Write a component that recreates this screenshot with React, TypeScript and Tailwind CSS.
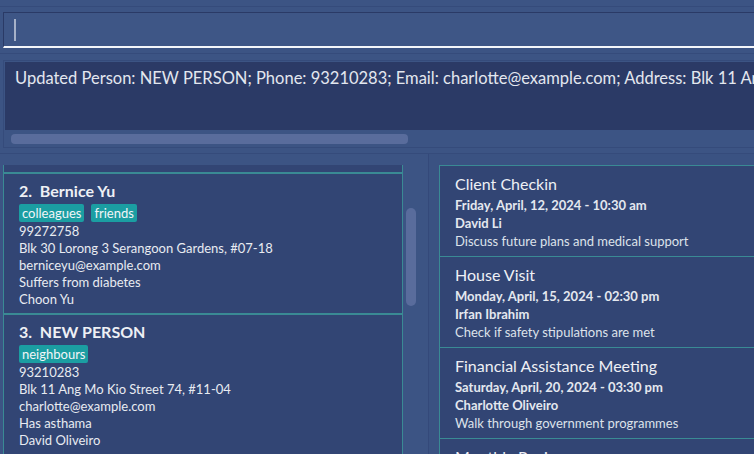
import React from "react";

type Person = {
  idx: number;
  name: string;
  tags: string[];
  phone: string;
  address: string;
  email: string;
  note: string;
  caretaker: string;
};

type Appt = {
  title: string;
  when: string;
  who: string;
  desc: string;
};

const people: Person[] = [
  {
    idx: 2,
    name: "Bernice Yu",
    tags: ["colleagues", "friends"],
    phone: "99272758",
    address: "Blk 30 Lorong 3 Serangoon Gardens, #07-18",
    email: "berniceyu@example.com",
    note: "Suffers from diabetes",
    caretaker: "Choon Yu",
  },
  {
    idx: 3,
    name: "NEW PERSON",
    tags: ["neighbours"],
    phone: "93210283",
    address: "Blk 11 Ang Mo Kio Street 74, #11-04",
    email: "charlotte@example.com",
    note: "Has asthama",
    caretaker: "David Oliveiro",
  },
];

const appts: Appt[] = [
  {
    title: "Client Checkin",
    when: "Friday, April, 12, 2024 - 10:30 am",
    who: "David Li",
    desc: "Discuss future plans and medical support",
  },
  {
    title: "House Visit",
    when: "Monday, April, 15, 2024 - 02:30 pm",
    who: "Irfan Ibrahim",
    desc: "Check if safety stipulations are met",
  },
  {
    title: "Financial Assistance Meeting",
    when: "Saturday, April, 20, 2024 - 03:30 pm",
    who: "Charlotte Oliveiro",
    desc: "Walk through government programmes",
  },
  {
    title: "Monthly Review",
    when: "Monday, April, 29, 2024 - 11:00 am",
    who: "Bernice Yu",
    desc: "Review care plan",
  },
];

const PersonCard: React.FC<{ p: Person }> = ({ p }) => (
  <div className="border border-[#3a8a94] bg-[#324574] pl-[15px] pt-[7px] pb-[5px]">
    <div className="text-[16px] leading-[20px] font-bold text-[#eef0f5]">
      {p.idx}.&nbsp;&nbsp;{p.name}
    </div>
    <div className="flex gap-[7px] mt-[3px]">
      {p.tags.map((t) => (
        <span key={t} className="h-[18px] px-[3px] rounded-[2px] bg-[#1b9ea2] text-[13px] leading-[18px] text-[#f2f5f8]">
          {t}
        </span>
      ))}
    </div>
    <div className="pt-[1px] text-[13px] leading-[17px] text-[#e8ebf1]">
      <div>{p.phone}</div>
      <div>{p.address}</div>
      <div>{p.email}</div>
      <div>{p.note}</div>
      <div>{p.caretaker}</div>
    </div>
  </div>
);

const ApptCard: React.FC<{ a: Appt }> = ({ a }) => (
  <div className="h-[92px] border border-[#3a8a94] bg-[#324574] pl-[15px] pt-[6px] -mt-px first:mt-0">
    <div className="text-[16px] leading-[24px] text-[#eef0f5] whitespace-nowrap">{a.title}</div>
    <div className="text-[13px] leading-[18px] font-bold text-[#e4e8ef] whitespace-nowrap">{a.when}</div>
    <div className="text-[13px] leading-[18px] font-bold text-[#e4e8ef] whitespace-nowrap">{a.who}</div>
    <div className="text-[13px] leading-[18px] text-[#dde2ea] whitespace-nowrap">{a.desc}</div>
  </div>
);

export default function App() {
  return (
    <div
      className="w-[754px] h-[454px] overflow-hidden bg-[#3c5484] flex flex-col"
      style={{ fontFamily: "Lato, 'Noto Sans', sans-serif" }}
    >
      {/* menu bar remnant */}
      <div className="h-[6px] shrink-0" />

      {/* command box */}
      <div className="shrink-0 border-t border-[#354b7b] pt-[5px] pb-[5px] pl-[3px]">
        <div className="h-[36px] bg-[#3e5686] border-t border-l border-[#2a3a66] border-b-2 border-b-[#f4f6fa] flex items-center pl-[10px]">
          <div className="w-[2px] h-[22px] bg-[#a6b1c8]" />
        </div>
      </div>

      {/* result display */}
      <div className="shrink-0 border-t border-[#354b7b] pt-[6px] pb-[5px]">
        <div className="ml-[3px] border-l border-t border-b border-[#354b7b] pl-px pt-px">
          <div className="h-[68px] bg-[#2b3a66] pl-[10px] pt-[4px] overflow-hidden">
            <div className="text-[16.5px] leading-[24px] text-[#e3e7ef] whitespace-nowrap">
              Updated Person: NEW PERSON; Phone: 93210283; Email: charlotte@example.com; Address: Blk 11 Ang Mo Kio Street 74, #11-04
            </div>
          </div>
          <div className="h-[17px] flex items-center pl-[6px]">
            <div className="w-[397px] h-[10px] rounded-[4px] bg-[#596c9c]" />
          </div>
        </div>
      </div>

      {/* lists */}
      <div className="flex-1 min-h-0 border-t border-[#354b7b] flex">
        <div className="w-[428px] shrink-0 flex pt-[11px]">
          <div className="w-[400px] ml-[3px] flex flex-col overflow-hidden">
            <div className="h-[8px] shrink-0 border-x border-b border-[#3a8a94] bg-[#324574]" />
            {people.map((p) => (
              <PersonCard key={p.idx} p={p} />
            ))}
          </div>
          <div className="pl-[3px] pt-[43px]">
            <div className="w-[10px] h-[98px] rounded-[5px] bg-[#596c9c]" />
          </div>
        </div>
        <div className="w-px shrink-0 bg-[#34497a]" />
        <div className="flex-1 min-w-0 bg-[#3a5282] pl-[10px] pt-[11px] overflow-hidden">
          <div className="w-[360px] flex flex-col">
            {appts.map((a) => (
              <ApptCard key={a.title} a={a} />
            ))}
          </div>
        </div>
      </div>
    </div>
  );
}
